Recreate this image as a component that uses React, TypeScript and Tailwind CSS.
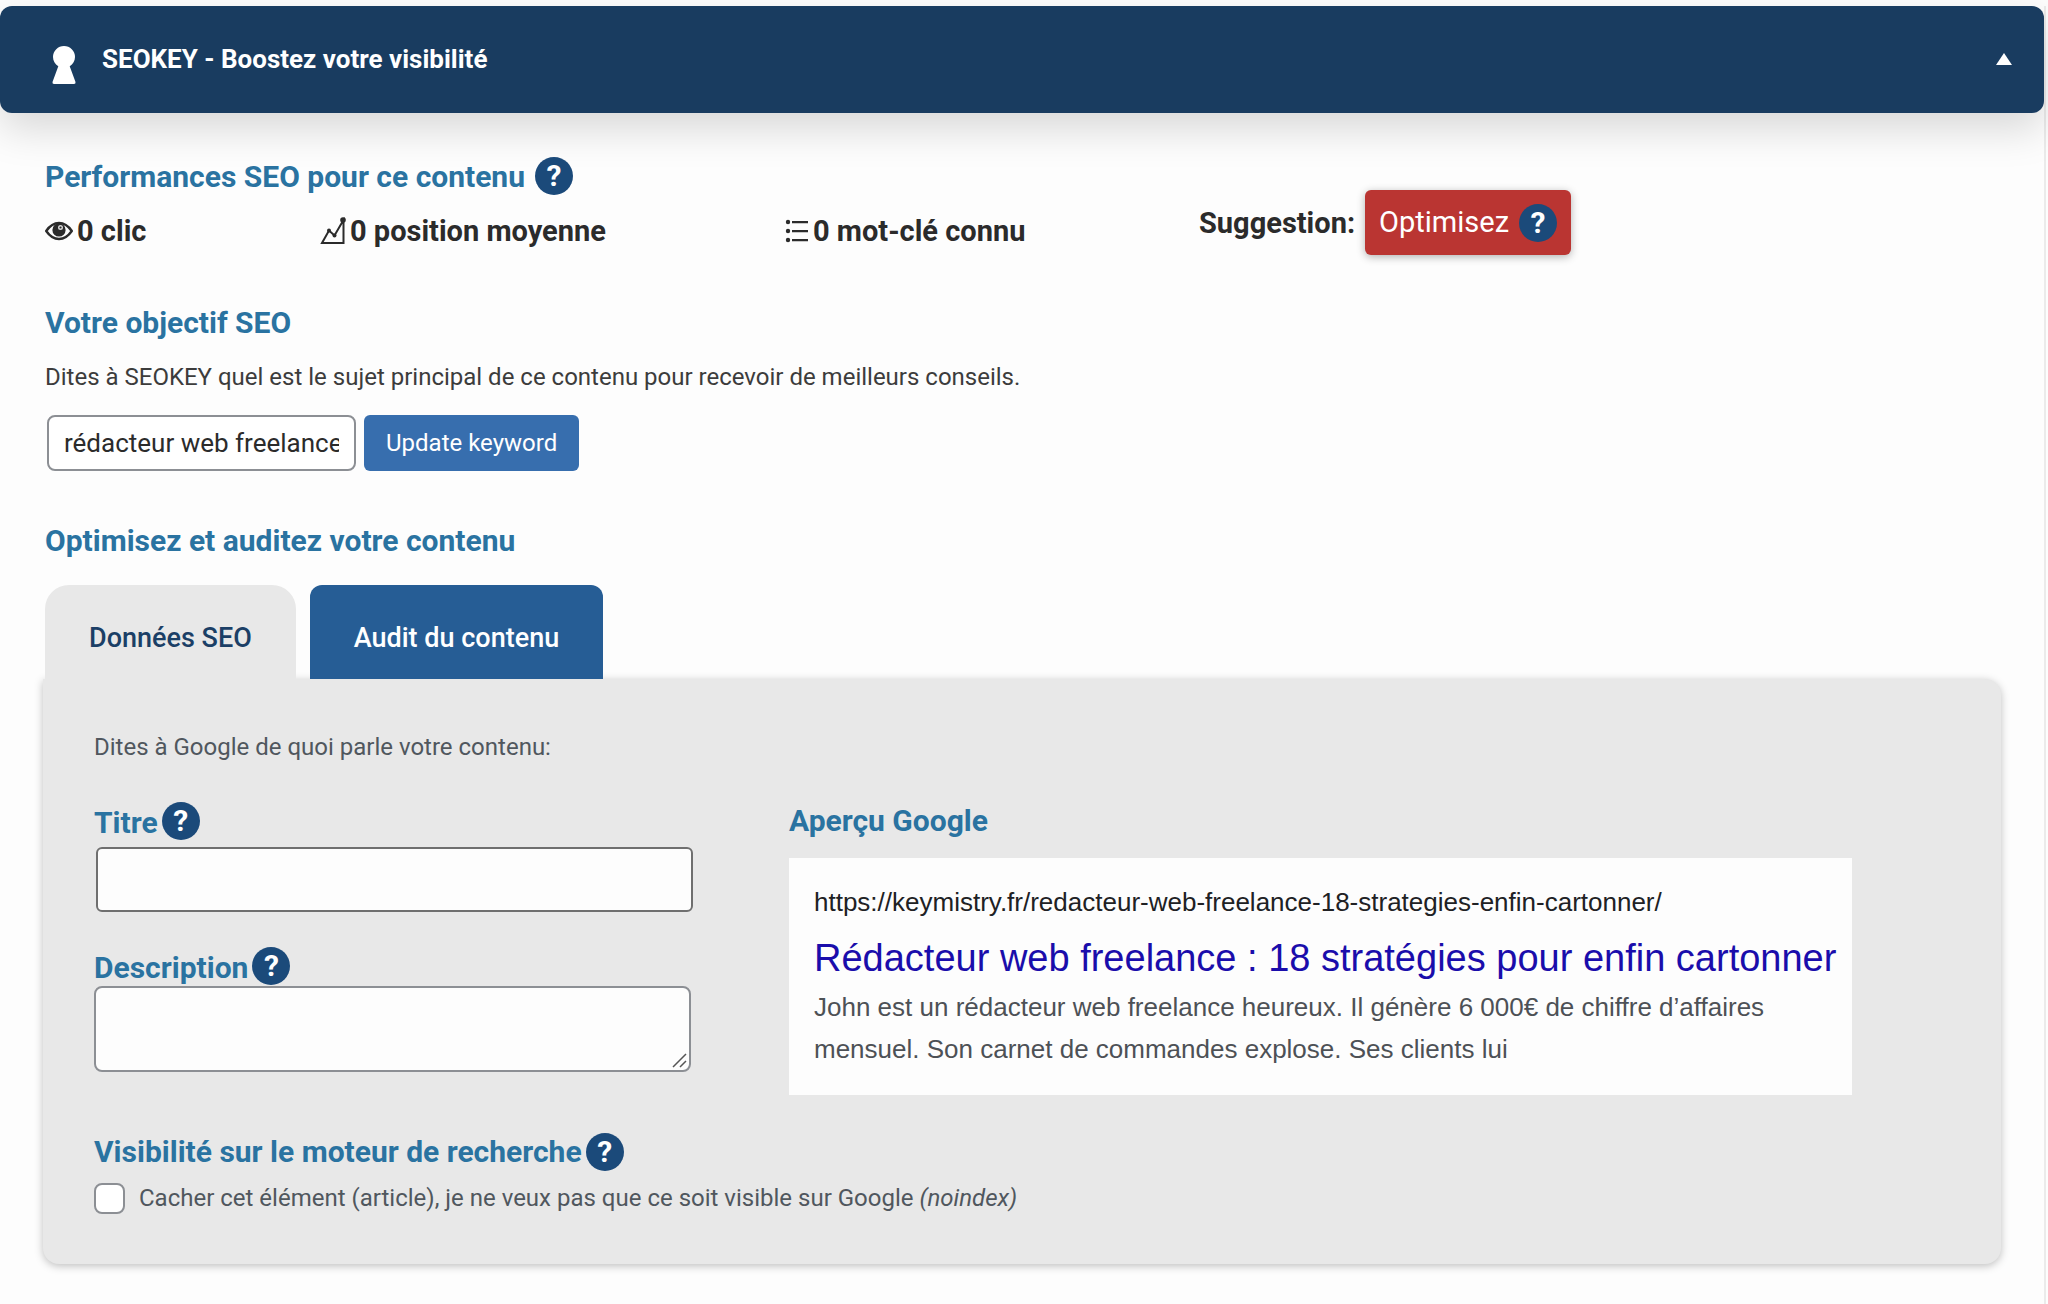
import React, { useState } from 'react';

interface HelpBadgeProps {
  label: string;
}

const HelpBadge: React.FC<HelpBadgeProps> = ({ label }) => (
  <button
    type="button"
    aria-label={label}
    className="flex items-center justify-center shrink-0 size-[38px] rounded-full bg-[#1b4a7a] text-white text-[30px] leading-none font-bold"
  >
    ?
  </button>
);

const KeyholeIcon = () => (
  <svg className="w-6 h-[38px] shrink-0" viewBox="0 0 24 38" fill="#ffffff" aria-hidden="true">
    <path d="M12 0a11 11 0 0 1 11 11c0 4-2 7-5.300 9.200L23.500 36q.4 2-1.500 2H2q-1.900 0-1.500-2L6.300 20.200C3 18 1 15 1 11A11 11 0 0 1 12 0z" />
  </svg>
);

const EyeIcon = () => (
  <svg className="w-7 h-5 shrink-0" viewBox="0 0 28 20" aria-hidden="true">
    <path d="M1.200 10C5 4.500 9 2 14 2S23 4.500 26.800 10C23 15.500 19 18 14 18S5 15.500 1.200 10z" fill="none" stroke="#2b2b2b" strokeWidth="2.400" />
    <circle cx="14" cy="9" r="6.600" fill="#2b2b2b" />
    <circle cx="15.500" cy="6.500" r="1.800" fill="none" stroke="#d8d8d8" strokeWidth="1.400" />
  </svg>
);

const ChartIcon = () => (
  <svg className="w-[26px] h-7 shrink-0" viewBox="0 0 26 28" aria-hidden="true">
    <path d="M2 26L9 13.500L14.500 18.500L23.500 3V26z" fill="none" stroke="#2b2b2b" strokeWidth="2" />
    <circle cx="9" cy="13.500" r="2" fill="#2b2b2b" />
    <circle cx="14.500" cy="18.500" r="2" fill="#2b2b2b" />
    <circle cx="23" cy="3" r="2.800" fill="#2b2b2b" />
  </svg>
);

const ListIcon = () => (
  <svg className="w-6 h-6 shrink-0" viewBox="0 0 24 24" fill="#2b2b2b" aria-hidden="true">
    <path d="M7 2h16v2.200H7zM7 11h16v2.200H7zM7 20h16v2.200H7z" />
    <circle cx="3" cy="3" r="2.200" />
    <circle cx="3" cy="12" r="2.200" />
    <circle cx="3" cy="21" r="2.200" />
  </svg>
);

const ResizeGrip = () => (
  <svg className="absolute right-1 bottom-1 size-4 pointer-events-none" viewBox="0 0 16 16" stroke="#555555" strokeWidth="1.500" aria-hidden="true">
    <path d="M2 15L15 2M9 15L15 9" />
  </svg>
);

const stats = [
  { icon: <EyeIcon />, text: '0 clic' },
  { icon: <ChartIcon />, text: '0 position moyenne' },
  { icon: <ListIcon />, text: '0 mot-clé connu' },
];

const headingClass = 'text-[30px] leading-9 font-bold text-[#2a73a1]';

const App: React.FC = () => {
  const [keyword, setKeyword] = useState('rédacteur web freelance');
  const [title, setTitle] = useState('');
  const [description, setDescription] = useState('');
  const [hidden, setHidden] = useState(false);

  return (
    <div className="flex flex-col min-h-screen bg-[#fdfdfd] pt-[6px] pr-[2px] font-[Roboto,sans-serif] text-[#2b2b2b]">
      <div className="flex-1 border-r-2 border-[#ebebeb]">
        <header className="flex items-center justify-between h-[107px] pb-[2px] pl-[52px] pr-8 rounded-xl bg-[#193c60] shadow-[0_16px_40px_rgba(0,0,0,0.15)]">
          <div className="flex items-center gap-[26px]">
            <div className="pt-3">
              <KeyholeIcon />
            </div>
            <h1 className="text-[26px] leading-9 font-bold text-white">SEOKEY - Boostez votre visibilité</h1>
          </div>
          <button type="button" aria-label="Replier le panneau">
            <svg className="w-4 h-3" viewBox="0 0 16 12" fill="#ffffff" aria-hidden="true">
              <path d="M8 0L16 12H0z" />
            </svg>
          </button>
        </header>

        <main className="pt-11 pl-[45px] pr-[43px]">
          <section>
            <div className="flex items-center gap-[10px]">
              <h2 className={`${headingClass} pt-[2px]`}>Performances SEO pour ce contenu</h2>
              <HelpBadge label="Aide sur les performances SEO" />
            </div>
            <div className="flex -mt-[5px]">
              <ul className="grid grid-cols-[275px_465px_414px] items-end pb-[6px]">
                {stats.map((stat) => (
                  <li key={stat.text} className="flex items-center gap-1 text-[29px] leading-9 font-bold">
                    {stat.icon}
                    {stat.text}
                  </li>
                ))}
              </ul>
              <div className="flex items-center gap-[10px]">
                <span className="text-[29px] leading-9 font-bold">Suggestion:</span>
                <div className="flex items-center gap-[10px] h-[65px] px-[14px] rounded-md bg-[#ba3532] text-white text-[29px] shadow-[0_2px_8px_rgba(0,0,0,0.3)]">
                  Optimisez
                  <HelpBadge label="Aide sur la suggestion" />
                </div>
              </div>
            </div>
          </section>

          <section className="pt-[50px]">
            <h2 className={headingClass}>Votre objectif SEO</h2>
            <label htmlFor="keyword" className="block pt-[18px] text-[24px] leading-9 text-[#3c3c3c]">
              Dites à SEOKEY quel est le sujet principal de ce contenu pour recevoir de meilleurs conseils.
            </label>
            <div className="flex gap-2 pt-5 pl-[2px]">
              <input
                id="keyword"
                type="text"
                value={keyword}
                onChange={(e) => setKeyword(e.target.value)}
                className="w-[309px] h-14 px-[15px] bg-white border-2 border-[#8c8f94] rounded-lg text-[26px]"
              />
              <button type="button" className="h-14 px-[22px] rounded-md bg-[#376eae] text-white text-[24px]">
                Update keyword
              </button>
            </div>
          </section>

          <section className="pt-[52px]">
            <h2 className={headingClass}>Optimisez et auditez votre contenu</h2>
            <div role="tablist" className="flex gap-[14px] pt-[26px]">
              <button type="button" role="tab" aria-selected="true" className="h-[94px] px-11 pt-3 rounded-t-3xl bg-[#e8e8e8] text-[27px] font-medium text-[#1b3f66]">
                Données SEO
              </button>
              <button type="button" role="tab" aria-selected="false" className="h-[94px] px-11 pt-3 rounded-t-xl bg-[#265d95] text-[27px] font-medium text-white">
                Audit du contenu
              </button>
            </div>

            <div role="tabpanel" className="-ml-[2px] pt-[50px] px-[51px] pb-[48px] rounded-b-2xl rounded-tr-2xl bg-[#e8e8e8] shadow-[0_2px_8px_rgba(0,0,0,0.25)]">
              <p className="text-[24px] leading-9 text-[#50575e]">Dites à Google de quoi parle votre contenu:</p>

              <div className="flex items-start gap-24 pt-[36px]">
                <div className="w-[599px] shrink-0">
                  <div className="flex items-center gap-1">
                    <label htmlFor="seo-title" className={`${headingClass} pt-1`}>Titre</label>
                    <HelpBadge label="Aide sur le titre" />
                  </div>
                  <div className="pt-[6px] pl-[2px]">
                    <input
                      id="seo-title"
                      type="text"
                      value={title}
                      onChange={(e) => setTitle(e.target.value)}
                      className="block w-full h-[65px] px-4 bg-[#fdfdfd] border-2 border-[#6f6f6f] rounded-md text-[26px]"
                    />
                  </div>
                  <div className="flex items-center gap-1 pt-[34px]">
                    <label htmlFor="seo-description" className={`${headingClass} pt-1`}>Description</label>
                    <HelpBadge label="Aide sur la description" />
                  </div>
                  <div className="relative mr-[2px]">
                    <textarea
                      id="seo-description"
                      value={description}
                      onChange={(e) => setDescription(e.target.value)}
                      className="block w-full h-[86px] px-4 py-2 resize-none bg-[#fdfdfd] border-2 border-[#8c8f94] rounded-lg text-[26px]"
                    />
                    <ResizeGrip />
                  </div>
                </div>

                <div>
                  <h2 className={`${headingClass} pt-[2px]`}>Aperçu Google</h2>
                  <article className="mt-[19px] pl-[25px] pr-4 pt-[26px] pb-[25px] bg-[#fdfdfd] font-['Liberation_Sans',sans-serif]">
                    <p className="text-[26px] leading-9 text-[#202124]">
                      https://keymistry.fr/redacteur-web-freelance-18-strategies-enfin-cartonner/
                    </p>
                    <a href="#apercu" className="block pt-[14px] pb-1 text-[38px] leading-12 text-[#1a0dab]">
                      Rédacteur web freelance : 18 stratégies pour enfin cartonner
                    </a>
                    <p className="text-[26px] leading-[42px] text-[#4d5156]">
                      John est un rédacteur web freelance heureux. Il génère 6 000€ de chiffre d’affaires
                      <br />
                      mensuel. Son carnet de commandes explose. Ses clients lui
                    </p>
                  </article>
                </div>
              </div>

              <div className="flex items-center gap-1 pt-[38px]">
                <h2 className={headingClass}>Visibilité sur le moteur de recherche</h2>
                <HelpBadge label="Aide sur la visibilité" />
              </div>
              <div className="flex items-center gap-[14px] pt-[9px]">
                <input
                  id="noindex"
                  type="checkbox"
                  checked={hidden}
                  onChange={(e) => setHidden(e.target.checked)}
                  className="appearance-none size-[31px] bg-white border-2 border-[#8c8f94] rounded-lg checked:bg-[#376eae]"
                />
                <label htmlFor="noindex" className="text-[24px] leading-9 text-[#50575e]">
                  Cacher cet élément (article), je ne veux pas que ce soit visible sur Google <em>(noindex)</em>
                </label>
              </div>
            </div>
          </section>
        </main>
      </div>
    </div>
  );
};

export default App;
